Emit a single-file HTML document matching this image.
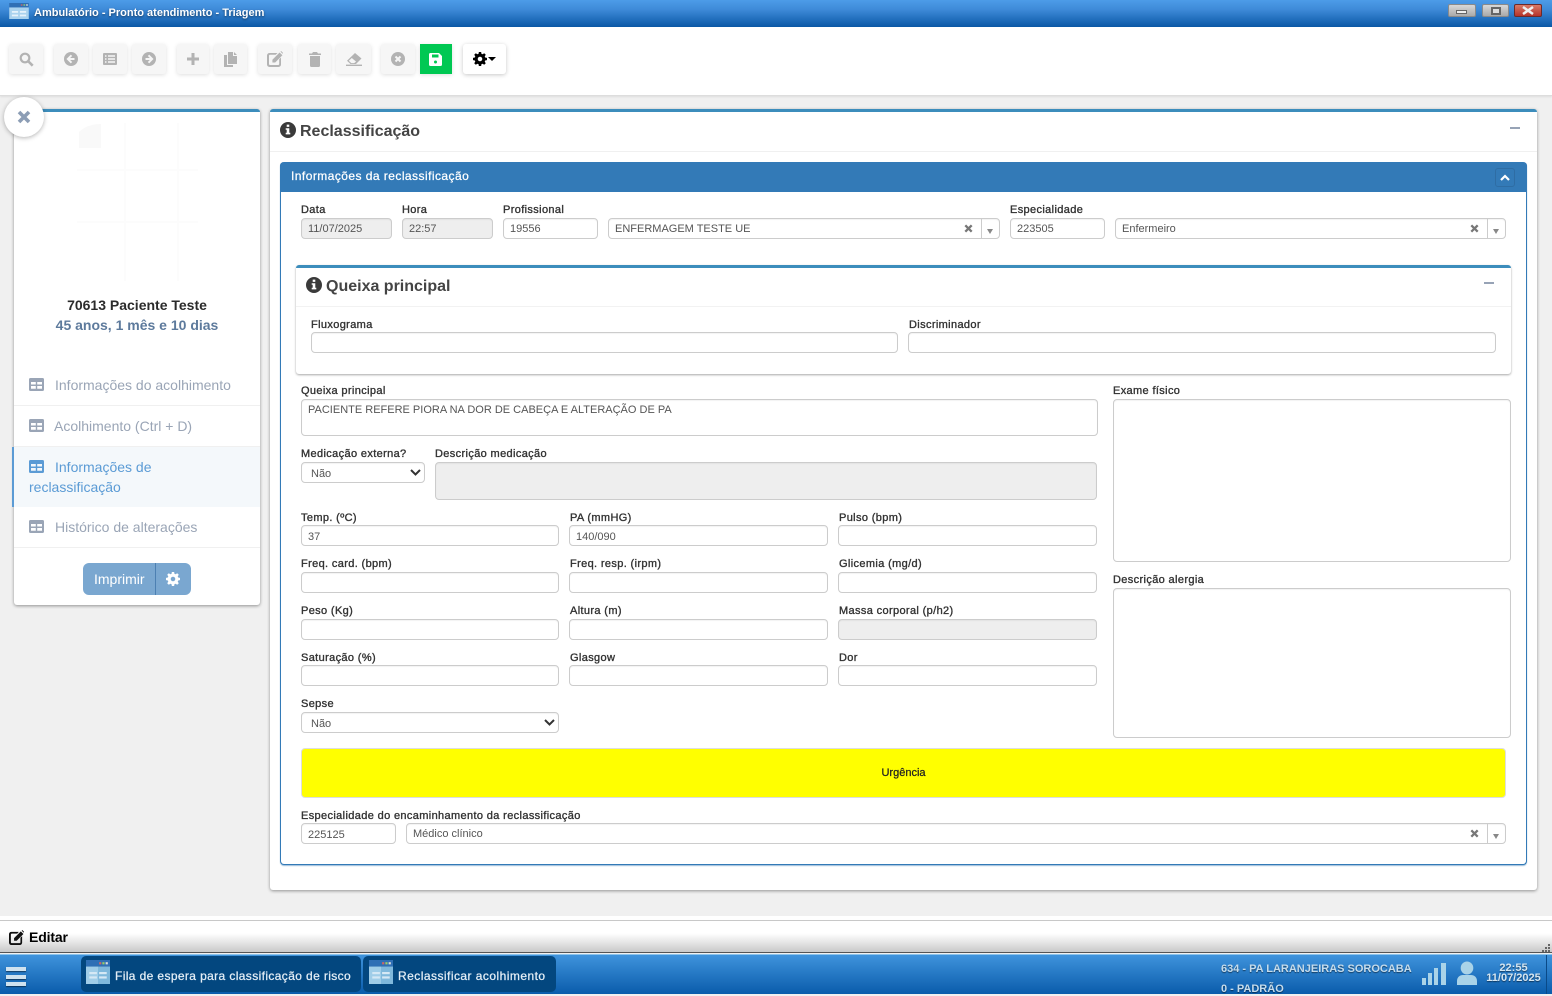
<!DOCTYPE html>
<html lang="pt-BR"><head><meta charset="utf-8"><title>Triagem</title>
<style>
*{box-sizing:border-box}
html,body{margin:0;padding:0}
body{width:1552px;height:994px;position:relative;overflow:hidden;background:#f0f0f0;font-family:"Liberation Sans",Arial,sans-serif;color:#333}
.a{position:absolute}
.t{position:absolute;white-space:nowrap}
.l{position:absolute;white-space:nowrap;font-size:11px;line-height:12px;margin-top:1px;color:#333;letter-spacing:.36px;-webkit-text-stroke:.35px #333}
.i{position:absolute;height:21px;background:#fff;border:1px solid #ccc;border-radius:4px;font-size:11px;line-height:20px;padding-left:6px;color:#555;white-space:nowrap;overflow:hidden;box-shadow:inset 0 1px 1px rgba(0,0,0,.05)}
.lo{line-height:22px}
.g{background:#eee}
.b{position:absolute;top:44px;height:30px;background:#f6f6f6;border-radius:3px;box-shadow:0 1px 4px rgba(0,0,0,.13);display:flex;align-items:center;justify-content:center}
.b svg{display:block}
.x{position:absolute;right:26px;top:5px;width:9px;height:9px}
.sep{position:absolute;top:0;bottom:0;border-left:1px solid #ccc}
.tri{position:absolute;width:0;height:0;border-left:3px solid transparent;border-right:3px solid transparent;border-top:5px solid #888}
.m{position:absolute;left:14px;width:246px;border-bottom:1px solid #f0f0f0;font-size:14px;color:#9aa5b6}
.chev{position:absolute;right:3px;top:6px}
</style></head>
<body>
<svg width="0" height="0" style="position:absolute">
<defs>
<symbol id="tb" viewBox="0 0 15 13"><path d="M1.500 0h12A1.500 1.500 0 0 1 15 1.500v10a1.500 1.500 0 0 1-1.500 1.500h-12A1.500 1.500 0 0 1 0 11.500v-10A1.500 1.500 0 0 1 1.500 0zM2 4v2.500h4.800V4zM8.200 4v2.500H13V4zM2 8v2.700h4.800V8zM8.200 8v2.700H13V8z" fill-rule="evenodd"/></symbol>
<symbol id="cx" viewBox="0 0 9 9"><path d="M1.300 1.300l6.400 6.400M7.700 1.300L1.300 7.700" stroke="#777" stroke-width="2.300"/></symbol>
<symbol id="win" viewBox="0 0 22 18"><rect width="22" height="5" fill="#2f6fb5"/><rect x="13" y="1.500" width="2" height="1.500" fill="#c66"/><rect x="16" y="1.500" width="2" height="1.500" fill="#9c6"/><rect x="19" y="1.500" width="2" height="1.500" fill="#ddd"/><rect y="5" width="22" height="13" fill="#a9d2ee"/><rect x="3" y="9" width="7" height="2" fill="#e5f2fb"/><rect x="12" y="9" width="7" height="2" fill="#e5f2fb"/><rect x="3" y="13" width="7" height="2" fill="#e5f2fb"/><rect x="12" y="13" width="7" height="2" fill="#e5f2fb"/></symbol>
<symbol id="info" viewBox="0 0 16 16"><path fill-rule="evenodd" d="M8 0a8 8 0 1 1 0 16A8 8 0 0 1 8 0zM6.700 2.600v2.300h2.600V2.600zM5.700 6.300v1.500h1v3H5.700v1.600h4.600v-1.600h-1V6.300z"/></symbol>
<symbol id="gear" viewBox="0 0 16 16"><path fill-rule="evenodd" d="M6.700 0h2.600l.4 2.100 1.300.5 1.800-1.200 1.800 1.800-1.200 1.800.5 1.300 2.100.4v2.600l-2.100.4-.5 1.300 1.200 1.800-1.800 1.800-1.800-1.200-1.300.5-.4 2.100H6.700l-.4-2.100-1.300-.5-1.800 1.200-1.800-1.800 1.200-1.800-.5-1.300L0 9.300V6.700l2.100-.4.500-1.300-1.200-1.800 1.800-1.800 1.800 1.200 1.300-.5zM8 5.400a2.600 2.600 0 1 0 0 5.200 2.600 2.600 0 0 0 0-5.200z"/></symbol>
<symbol id="edit" viewBox="0 0 16 16"><path fill-rule="evenodd" d="M2.500 2h8L8.700 3.800H3a1 1 0 0 0-1 1v8.200a1 1 0 0 0 1 1h8.200a1 1 0 0 0 1-1V8.300L14 6.500v7a2.500 2.500 0 0 1-2.500 2.500h-9A2.500 2.500 0 0 1 0 13.500v-9A2.500 2.500 0 0 1 2.500 2z"/><path d="M12.600 1.500l2.800 2.800-7.200 7.200H5.400V8.700zM13.500.6l.6-.6 2 2-.6.8z"/></symbol>
</defs>
</svg>

<!-- title bar -->
<div class="a" style="left:0;top:0;width:1552px;height:27px;background:linear-gradient(#4d9ce8,#3e8ad8 35%,#0a58a6)"></div>
<svg class="a" style="left:9px;top:3px" width="20" height="16"><use href="#win"/></svg>
<div class="t" style="left:34px;top:6px;font-size:11px;line-height:14px;color:#fff;font-weight:bold;text-shadow:0 1px 2px rgba(0,0,0,.5)">Ambulatório - Pronto atendimento - Triagem</div>
<div class="a" style="left:1448px;top:4px;width:28px;height:13px;border:1px solid #8a8a8a;border-radius:2px;background:linear-gradient(#d8d8d8,#aaa)"><div class="a" style="left:7px;top:5px;width:11px;height:4px;background:#eee;border:1px solid #666"></div></div>
<div class="a" style="left:1482px;top:4px;width:27px;height:13px;border:1px solid #8a8a8a;border-radius:2px;background:linear-gradient(#d8d8d8,#aaa)"><div class="a" style="left:8px;top:2px;width:10px;height:8px;background:#ddd;border:2px solid #666"></div></div>
<div class="a" style="left:1514px;top:4px;width:28px;height:13px;border:1px solid #6b2a2a;border-radius:2px;background:linear-gradient(#d97a66,#b5332a)"><svg class="a" style="left:7px;top:1px" width="12" height="9"><path d="M1 1l10 7M11 1L1 8" stroke="#eee" stroke-width="2.500"/></svg></div>

<!-- toolbar -->
<div class="a" style="left:0;top:27px;width:1552px;height:69px;background:#fff;border-bottom:1px solid #ddd;box-shadow:0 1px 2px rgba(0,0,0,.08)"></div>
<div class="b" style="left:9px;width:34px"><svg width="15" height="15" viewBox="0 0 15 15"><circle cx="6" cy="6" r="4.300" fill="none" stroke="#b3b3b3" stroke-width="2.200"/><path d="M9.500 9.500l4.200 4.200" stroke="#b3b3b3" stroke-width="2.600"/></svg></div>
<div class="b" style="left:54px;width:34px"><svg width="14" height="14" viewBox="0 0 14 14"><circle cx="7" cy="7" r="7" fill="#b3b3b3"/><path d="M7.500 3.300L3.800 7l3.700 3.700M4.200 7h6.300" stroke="#f6f6f6" stroke-width="1.900" fill="none"/></svg></div>
<div class="b" style="left:93px;width:34px"><svg width="14" height="12" viewBox="0 0 14 12"><path fill="#b3b3b3" fill-rule="evenodd" d="M1 0h12a1 1 0 0 1 1 1v10a1 1 0 0 1-1 1H1a1 1 0 0 1-1-1V1a1 1 0 0 1 1-1zM2 2.300v1.500h1.500V2.300zM5 2.300v1.500h7V2.300zM2 5.300v1.500h1.500V5.300zM5 5.300v1.500h7V5.300zM2 8.300v1.500h1.500V8.300zM5 8.300v1.500h7V8.300z"/></svg></div>
<div class="b" style="left:132px;width:34px"><svg width="14" height="14" viewBox="0 0 14 14"><circle cx="7" cy="7" r="7" fill="#b3b3b3"/><path d="M6.500 3.300L10.200 7l-3.700 3.700M9.800 7H3.500" stroke="#f6f6f6" stroke-width="1.900" fill="none"/></svg></div>
<div class="b" style="left:177px;width:32px"><svg width="12" height="12" viewBox="0 0 12 12"><path d="M6 0v12M0 6h12" stroke="#b3b3b3" stroke-width="3"/></svg></div>
<div class="b" style="left:214px;width:33px"><svg width="13" height="15" viewBox="0 0 13 15"><path fill="#b3b3b3" d="M4 0h5v4h4v8H4zM10 0l3 3h-3zM0 3h3v10h6v2H0z"/></svg></div>
<div class="b" style="left:258px;width:34px"><svg width="16" height="16" viewBox="0 0 16 16" fill="#b3b3b3"><use href="#edit"/></svg></div>
<div class="b" style="left:298px;width:33px"><svg width="12" height="15" viewBox="0 0 12 15"><path fill="#b3b3b3" d="M4 0h4l1 1.500h3V3H0V1.500h3zM1 4h10v9.500a1.500 1.500 0 0 1-1.500 1.500h-7A1.500 1.500 0 0 1 1 13.500z"/></svg></div>
<div class="b" style="left:336px;width:35px"><svg width="16" height="13" viewBox="0 0 16 13"><path fill="#b3b3b3" d="M9 0l6.500 5.500-5.500 5.500H4.500L1 7.700z"/><path fill="#f6f6f6" d="M2.800 7.700l3-2.700 4.300 3.600-2 1.500H5.300z"/><path d="M0 12.300h16" stroke="#b3b3b3" stroke-width="1.400"/></svg></div>
<div class="b" style="left:381px;width:34px"><svg width="14" height="14" viewBox="0 0 14 14"><circle cx="7" cy="7" r="7" fill="#b3b3b3"/><path d="M4.500 4.500l5 5M9.500 4.500l-5 5" stroke="#f6f6f6" stroke-width="2"/></svg></div>
<div class="b" style="left:420px;width:32px;background:#00c853;border-radius:0;padding-right:1px"><svg width="13" height="13" viewBox="0 0 13 13"><path fill="#fff" fill-rule="evenodd" d="M1.500 0H10l3 3v8.500a1.500 1.500 0 0 1-1.500 1.500h-10A1.500 1.500 0 0 1 0 11.500v-10A1.500 1.500 0 0 1 1.500 0zM3 1.500v3h6.500v-3zM6.500 7.500a1.500 1.500 0 1 0 0 3 1.500 1.500 0 0 0 0-3z"/></svg></div>
<div class="b" style="left:463px;width:43px;background:#fff;box-shadow:0 1px 4px rgba(0,0,0,.22)"><svg width="14" height="14" style="margin-right:1px"><use href="#gear"/></svg><div style="width:0;height:0;border-left:4px solid transparent;border-right:4px solid transparent;border-top:4px solid #000"></div></div>

<!-- left panel -->
<div class="a" style="left:14px;top:109px;width:246px;height:496px;background:#fff;border-top:3px solid #3c8dbc;border-radius:3px;box-shadow:0 1px 3px rgba(0,0,0,.4)"></div>
<svg class="a" style="left:76px;top:122px" width="122" height="160"><path d="M1 48h122M1 100h122M49 1v158M102 1v158" stroke="#fcfcfc" stroke-width="2"/><path d="M3 26V10q8-8 22-8v24z" fill="#f9f9f9"/></svg>
<div class="a" style="left:4px;top:97px;width:40px;height:40px;border-radius:50%;background:#fff;box-shadow:0 1px 5px rgba(0,0,0,.3)"></div>
<svg class="a" style="left:17px;top:110px" width="14" height="14"><path d="M2 2l10 10M12 2L2 12" stroke="#8c9db5" stroke-width="3.600"/></svg>
<div class="t" style="left:14px;width:246px;top:297px;text-align:center;font-size:14px;line-height:16px;font-weight:bold;color:#2b2b2b">70613 Paciente Teste</div>
<div class="t" style="left:14px;width:246px;top:317px;text-align:center;font-size:14px;line-height:16px;font-weight:bold;color:#5d7a9c">45 anos, 1 mês e 10 dias</div>

<div class="m" style="top:365px;height:41px"></div>
<svg class="a" style="left:29px;top:378px" width="15" height="13" fill="#9aa5b6"><use href="#tb"/></svg>
<div class="t" style="left:55px;top:377px;font-size:14px;line-height:16px;color:#9aa5b6">Informações do acolhimento</div>
<div class="m" style="top:406px;height:41px"></div>
<svg class="a" style="left:29px;top:419px" width="15" height="13" fill="#9aa5b6"><use href="#tb"/></svg>
<div class="t" style="left:54px;top:418px;font-size:14px;line-height:16px;color:#9aa5b6">Acolhimento (Ctrl + D)</div>
<div class="a" style="left:12px;top:447px;width:248px;height:60px;background:#f4f8fb;border-left:2px solid #5b9bd5"></div>
<svg class="a" style="left:29px;top:460px" width="15" height="13" fill="#5b9bd5"><use href="#tb"/></svg>
<div class="t" style="left:55px;top:459px;font-size:14px;line-height:16px;color:#5b9bd5">Informações de</div>
<div class="t" style="left:29px;top:479px;font-size:14px;line-height:16px;color:#5b9bd5">reclassificação</div>
<div class="m" style="top:507px;height:41px"></div>
<svg class="a" style="left:29px;top:520px" width="15" height="13" fill="#9aa5b6"><use href="#tb"/></svg>
<div class="t" style="left:55px;top:519px;font-size:14px;line-height:16px;color:#9aa5b6">Histórico de alterações</div>
<div class="a" style="left:83px;top:563px;width:108px;height:32px;background:#7aa7d0;border-radius:6px"></div>
<div class="a" style="left:155px;top:563px;width:1px;height:32px;background:#4d80b2"></div>
<div class="t" style="left:94px;top:571px;font-size:14px;line-height:16px;color:#fff">Imprimir</div>
<svg class="a" style="left:166px;top:572px" width="14" height="14" fill="#fff"><use href="#gear"/></svg>

<!-- main panel -->
<div class="a" style="left:270px;top:109px;width:1267px;height:781px;background:#fff;border-top:3px solid #3c8dbc;border-radius:3px;box-shadow:0 1px 3px rgba(0,0,0,.4)"></div>
<div class="a" style="left:270px;top:151px;width:1267px;height:1px;background:#f0f0f0"></div>
<svg class="a" style="left:280px;top:122px" width="16" height="16" fill="#3a3a3a"><use href="#info"/></svg>
<div class="t" style="left:300px;top:123px;font-size:16px;line-height:18px;font-weight:bold;color:#444">Reclassificação</div>
<div class="a" style="left:1510px;top:127px;width:10px;height:2px;background:#97a3b6"></div>

<div class="a" style="left:280px;top:162px;width:1247px;height:703px;background:#fff;border:1px solid #337ab7;border-top:0;border-radius:4px;box-shadow:0 1px 1px rgba(51,122,183,.5)"></div>
<div class="a" style="left:280px;top:162px;width:1247px;height:30px;background:#337ab7;border-radius:4px 4px 0 0"></div>
<div class="t" style="left:291px;top:169px;font-size:12px;line-height:15px;color:#fff;-webkit-text-stroke:.25px #fff;letter-spacing:.45px">Informações da reclassificação</div>
<div class="a" style="left:1495px;top:168px;width:20px;height:19px;border:1px solid #2e6da4;border-radius:3px"><svg class="a" style="left:4px;top:5px" width="10" height="7"><path d="M1 6l4-4 4 4" fill="none" stroke="#fff" stroke-width="2.200"/></svg></div>

<div class="l" style="left:301px;top:203px">Data</div>
<div class="l" style="left:402px;top:203px">Hora</div>
<div class="l" style="left:503px;top:203px">Profissional</div>
<div class="l" style="left:1010px;top:203px">Especialidade</div>
<div class="i g" style="left:301px;top:218px;width:91px">11/07/2025</div>
<div class="i g" style="left:402px;top:218px;width:91px">22:57</div>
<div class="i" style="left:503px;top:218px;width:95px">19556</div>
<div class="i" style="left:608px;top:218px;width:392px">ENFERMAGEM TESTE UE<svg class="x"><use href="#cx"/></svg><span class="sep" style="right:17px"></span><span class="tri" style="right:6px;top:10px"></span></div>
<div class="i" style="left:1010px;top:218px;width:95px">223505</div>
<div class="i" style="left:1115px;top:218px;width:391px">Enfermeiro<svg class="x"><use href="#cx"/></svg><span class="sep" style="right:17px"></span><span class="tri" style="right:6px;top:10px"></span></div>

<!-- queixa panel -->
<div class="a" style="left:296px;top:265px;width:1215px;height:109px;background:#fff;border-top:3px solid #3c8dbc;border-radius:3px;box-shadow:0 1px 2px rgba(0,0,0,.35)"></div>
<div class="a" style="left:296px;top:306px;width:1215px;height:1px;background:#f2f2f2"></div>
<svg class="a" style="left:306px;top:277px" width="16" height="16" fill="#3a3a3a"><use href="#info"/></svg>
<div class="t" style="left:326px;top:278px;font-size:16px;line-height:18px;font-weight:bold;color:#444">Queixa principal</div>
<div class="a" style="left:1484px;top:282px;width:10px;height:2px;background:#97a3b6"></div>
<div class="l" style="left:311px;top:318px">Fluxograma</div>
<div class="l" style="left:909px;top:318px">Discriminador</div>
<div class="i" style="left:311px;top:332px;width:587px"></div>
<div class="i" style="left:908px;top:332px;width:588px"></div>

<div class="l" style="left:301px;top:384px">Queixa principal</div>
<div class="l" style="left:1113px;top:384px">Exame físico</div>
<div class="i" style="left:301px;top:399px;width:797px;height:37px;white-space:normal;line-height:20px">PACIENTE REFERE PIORA NA DOR DE CABEÇA E ALTERAÇÃO DE PA</div>
<div class="i" style="left:1113px;top:399px;width:398px;height:163px"></div>
<div class="l" style="left:301px;top:447px">Medicação externa?</div>
<div class="l" style="left:435px;top:447px">Descrição medicação</div>
<div class="i lo" style="left:301px;top:462px;width:124px;padding-left:9px">Não<svg class="chev" style="right:3px" width="11" height="7"><path d="M1 1l4.500 4.500L10 1" fill="none" stroke="#333" stroke-width="2"/></svg></div>
<div class="i g" style="left:435px;top:462px;width:662px;height:38px"></div>

<div class="l" style="left:301px;top:511px">Temp. (ºC)</div>
<div class="l" style="left:570px;top:511px">PA (mmHG)</div>
<div class="l" style="left:839px;top:511px">Pulso (bpm)</div>
<div class="i lo" style="left:301px;top:525px;width:258px">37</div>
<div class="i lo" style="left:569px;top:525px;width:259px">140/090</div>
<div class="i" style="left:838px;top:525px;width:259px"></div>

<div class="l" style="left:301px;top:557px">Freq. card. (bpm)</div>
<div class="l" style="left:570px;top:557px">Freq. resp. (irpm)</div>
<div class="l" style="left:839px;top:557px">Glicemia (mg/d)</div>
<div class="i" style="left:301px;top:572px;width:258px"></div>
<div class="i" style="left:569px;top:572px;width:259px"></div>
<div class="i" style="left:838px;top:572px;width:259px"></div>

<div class="l" style="left:301px;top:604px">Peso (Kg)</div>
<div class="l" style="left:570px;top:604px">Altura (m)</div>
<div class="l" style="left:839px;top:604px">Massa corporal (p/h2)</div>
<div class="i" style="left:301px;top:619px;width:258px"></div>
<div class="i" style="left:569px;top:619px;width:259px"></div>
<div class="i g" style="left:838px;top:619px;width:259px"></div>

<div class="l" style="left:301px;top:651px">Saturação (%)</div>
<div class="l" style="left:570px;top:651px">Glasgow</div>
<div class="l" style="left:839px;top:651px">Dor</div>
<div class="i" style="left:301px;top:665px;width:258px"></div>
<div class="i" style="left:569px;top:665px;width:259px"></div>
<div class="i" style="left:838px;top:665px;width:259px"></div>

<div class="l" style="left:301px;top:697px">Sepse</div>
<div class="i lo" style="left:301px;top:712px;width:258px;padding-left:9px">Não<svg class="chev" width="11" height="7"><path d="M1 1l4.500 4.500L10 1" fill="none" stroke="#333" stroke-width="2"/></svg></div>

<div class="l" style="left:1113px;top:573px">Descrição alergia</div>
<div class="i" style="left:1113px;top:588px;width:398px;height:150px"></div>

<div class="a" style="left:301px;top:748px;width:1205px;height:50px;background:#ff0;border:1px solid #ddd;border-radius:4px"></div>
<div class="t" style="left:301px;width:1205px;top:767px;text-align:center;font-size:11px;line-height:12px;color:#222;-webkit-text-stroke:.25px #222">Urgência</div>

<div class="l" style="left:301px;top:809px">Especialidade do encaminhamento da reclassificação</div>
<div class="i lo" style="left:301px;top:823px;width:95px">225125</div>
<div class="i" style="left:406px;top:823px;width:1100px;line-height:20px">Médico clínico<svg class="x"><use href="#cx"/></svg><span class="sep" style="right:17px"></span><span class="tri" style="right:6px;top:10px"></span></div>

<!-- bottom -->
<div class="a" style="left:0;top:916px;width:1552px;height:5px;background:#fff;border-bottom:1px solid #c8c8c8"></div>
<div class="a" style="left:0;top:921px;width:1552px;height:32px;background:linear-gradient(#fff,#fff 40%,#c9c9c9);border-bottom:1px solid #555"></div>
<svg class="a" style="left:9px;top:930px" width="15" height="15" viewBox="0 0 16 16" fill="#111"><use href="#edit"/></svg>
<div class="t" style="left:29px;top:929px;font-size:14px;line-height:16px;font-weight:bold;color:#000;letter-spacing:-.15px">Editar</div>
<svg class="a" style="left:1542px;top:943px" width="9" height="9" fill="#666"><rect x="6" y="1" width="2" height="2"/><rect x="3" y="4" width="2" height="2"/><rect x="6" y="4" width="2" height="2"/><rect x="0" y="7" width="2" height="2"/><rect x="3" y="7" width="2" height="2"/><rect x="6" y="7" width="2" height="2"/></svg>

<div class="a" style="left:0;top:954px;width:1552px;height:40px;background:linear-gradient(#3f93dc,#0a5cab);border-top:1px solid #8cc4ec"></div>
<div class="a" style="left:6px;top:967px;width:20px;height:4px;background:#cfe2ef;box-shadow:0 1px 1px rgba(0,0,0,.5)"></div>
<div class="a" style="left:6px;top:975px;width:20px;height:4px;background:#cfe2ef;box-shadow:0 1px 1px rgba(0,0,0,.5)"></div>
<div class="a" style="left:6px;top:982px;width:20px;height:4px;background:#cfe2ef;box-shadow:0 1px 1px rgba(0,0,0,.5)"></div>
<div class="a" style="left:81px;top:956px;width:280px;height:36px;background:#03477f;border-radius:5px"></div>
<svg class="a" style="left:86px;top:960px" width="24" height="24" viewBox="0 0 22 22"><rect width="22" height="6" fill="#2f6fb5"/><rect x="12" y="2" width="2" height="2" fill="#c66"/><rect x="15" y="2" width="2" height="2" fill="#9c6"/><rect x="18" y="2" width="2" height="2" fill="#ddd"/><rect y="6" width="11" height="16" fill="#a0cde8"/><rect x="11" y="6" width="11" height="16" fill="#7fb8dc"/><rect x="3" y="11" width="7" height="2" fill="#d5e8f5"/><rect x="12" y="11" width="7" height="2" fill="#d5e8f5"/><rect x="3" y="15" width="7" height="2" fill="#d5e8f5"/><rect x="12" y="15" width="7" height="2" fill="#d5e8f5"/></svg>
<div class="t" style="left:115px;top:969px;font-size:12px;line-height:15px;color:#e4eef6;-webkit-text-stroke:.25px #e4eef6;letter-spacing:.38px">Fila de espera para classificação de risco</div>
<div class="a" style="left:363px;top:956px;width:193px;height:36px;background:#03477f;border-radius:5px"></div>
<svg class="a" style="left:369px;top:960px" width="24" height="24" viewBox="0 0 22 22"><rect width="22" height="6" fill="#2f6fb5"/><rect x="12" y="2" width="2" height="2" fill="#c66"/><rect x="15" y="2" width="2" height="2" fill="#9c6"/><rect x="18" y="2" width="2" height="2" fill="#ddd"/><rect y="6" width="11" height="16" fill="#a0cde8"/><rect x="11" y="6" width="11" height="16" fill="#7fb8dc"/><rect x="3" y="11" width="7" height="2" fill="#d5e8f5"/><rect x="12" y="11" width="7" height="2" fill="#d5e8f5"/><rect x="3" y="15" width="7" height="2" fill="#d5e8f5"/><rect x="12" y="15" width="7" height="2" fill="#d5e8f5"/></svg>
<div class="t" style="left:398px;top:969px;font-size:12px;line-height:15px;color:#e4eef6;-webkit-text-stroke:.25px #e4eef6;letter-spacing:.46px">Reclassificar acolhimento</div>

<div class="t" style="left:1221px;top:962px;font-size:11px;line-height:14px;color:#c5dcec;font-weight:bold;text-shadow:0 1px 1px rgba(0,0,0,.5)">634 - PA LARANJEIRAS SOROCABA</div>
<div class="t" style="left:1221px;top:982px;font-size:11px;line-height:14px;color:#c5dcec;font-weight:bold;text-shadow:0 1px 1px rgba(0,0,0,.5)">0 - PADRÃO</div>
<svg class="a" style="left:1421px;top:962px" width="28" height="24" fill="#a9d3e8"><rect x="1" y="16" width="4" height="7"/><rect x="7" y="11" width="4" height="12"/><rect x="13" y="6" width="4" height="17"/><rect x="20" y="1" width="5" height="22"/></svg>
<svg class="a" style="left:1456px;top:961px" width="22" height="25" fill="#a9d3e8"><ellipse cx="11" cy="7" rx="6.300" ry="6.500"/><path d="M1 24v-4c0-4 3-6 6-6h8c3 0 6 2 6 6v4z"/></svg>
<div class="t" style="left:1486px;top:963px;width:55px;text-align:center;font-size:11px;line-height:10px;color:#d5e6f2;font-weight:bold;text-shadow:0 1px 1px rgba(0,0,0,.5)">22:55<br>11/07/2025</div>
<div class="a" style="left:1546px;top:955px;width:1px;height:39px;background:#0a4a88"></div>
</body></html>
